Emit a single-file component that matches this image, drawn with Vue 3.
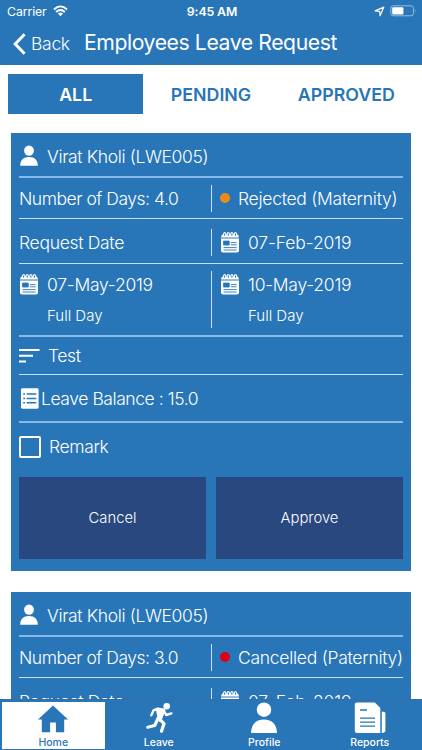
<script setup>
const tabs = ['ALL', 'PENDING', 'APPROVED']
const requests = [
  { id: 1, days: '4.0', status: 'Rejected (Maternity)', tone: 'rejected' },
  { id: 2, days: '3.0', status: 'Cancelled (Paternity)', tone: 'cancelled' },
]
</script>

<template>
  <div class="screen">
    <header class="header">
      <div class="status">
        <div class="carrier">
          <span>Carrier</span>
          <svg width="15" height="12" viewBox="0 0 15 12">
            <g fill="none" stroke="currentColor" stroke-width="1.8">
              <path d="M.9 4.5Q7.5-1.7 14.1 4.5" />
              <path d="M3.1 7Q7.5 2.9 11.9 7" />
            </g>
            <path d="M4.9 8.6Q7.5 6.4 10.1 8.6L7.5 11.2Z" fill="currentColor" />
          </svg>
        </div>
        <span class="time">9:45 AM</span>
        <div class="indicators">
          <svg width="11" height="11" viewBox="0 0 11 11">
            <path d="M9.8 1.1L1.2 4.9L5.7 5.3L6.1 9.8Z" fill="none" stroke="currentColor" stroke-width="1.2" stroke-linejoin="round" />
          </svg>
          <svg width="27" height="12" viewBox="0 0 27 12">
            <rect x=".8" y=".8" width="22.6" height="10" rx="2.4" fill="none" stroke="#8fbde3" />
            <rect x="2.2" y="2.2" width="11.2" height="7.2" rx="1" fill="#fff" />
            <path d="M24.8 4Q26.5 5.8 24.8 7.6Z" fill="#8fbde3" />
          </svg>
        </div>
      </div>
      <div class="nav">
        <svg class="chevron" width="14" height="22" viewBox="0 0 14 22">
          <path d="M12.6 1.2L3.2 11L12.6 20.8" fill="none" stroke="currentColor" stroke-width="3" />
        </svg>
        <span class="back">Back</span>
        <span class="title">Employees Leave Request</span>
      </div>
    </header>

    <div class="tabs">
      <div v-for="(tab, i) in tabs" :key="tab" class="tab" :class="{ active: i === 0 }">{{ tab }}</div>
    </div>

    <main class="list">
      <article v-for="r in requests" :key="r.id" class="card">
        <div class="row name">
          <svg class="icon" width="20" height="22" viewBox="0 0 20 22">
            <ellipse cx="10" cy="5.6" rx="4.9" ry="5.2" fill="#fff" />
            <path d="M1.2 20.8C1.2 15.2 4.4 12 10 12S18.8 15.2 18.8 20.8Z" fill="#fff" />
          </svg>
          <span class="t-name">Virat Kholi (LWE005)</span>
        </div>
        <div class="row days">
          <div class="cell"><span class="t-days">Number of Days: {{ r.days }}</span></div>
          <div class="cell split">
            <i class="dot" :class="r.tone"></i>
            <span class="t-status">{{ r.status }}</span>
          </div>
        </div>
        <div class="row requested">
          <div class="cell"><span class="t-request">Request Date</span></div>
          <div class="cell split">
            <svg class="icon" width="20" height="21" viewBox="0 0 20 21">
              <path d="M1 5.6L1.6 3.6Q2 2.4 3.2 2.4H16.8Q18 2.4 18.4 3.6L19 5.6Z" fill="#fff" />
              <g fill="#2876b8" stroke="#fff" stroke-width="1.2">
                <ellipse cx="4.7" cy="2.6" rx="1.2" ry="2" /><ellipse cx="8.3" cy="2.6" rx="1.2" ry="2" />
                <ellipse cx="11.9" cy="2.6" rx="1.2" ry="2" /><ellipse cx="15.5" cy="2.6" rx="1.2" ry="2" />
              </g>
              <path d="M1 6.6H19V18.6Q19 20.6 17 20.6H3Q1 20.6 1 18.6Z" fill="#fff" />
              <path d="M3.6 9.1H9.2V13H3.6ZM11 10.6H16.6M11 12.8H16.6M3.6 15.6H16.6M3.6 18H16.6" fill="#2876b8" stroke="#2876b8" stroke-width=".9" />
            </svg>
            <span class="t-feb">07-Feb-2019</span>
          </div>
        </div>
        <div class="row range">
          <div v-for="(date, i) in ['07-May-2019', '10-May-2019']" :key="date" class="cell period" :class="{ split: i === 1 }">
            <svg class="icon" width="20" height="21" viewBox="0 0 20 21">
              <path d="M1 5.6L1.6 3.6Q2 2.4 3.2 2.4H16.8Q18 2.4 18.4 3.6L19 5.6Z" fill="#fff" />
              <g fill="#2876b8" stroke="#fff" stroke-width="1.2">
                <ellipse cx="4.7" cy="2.6" rx="1.2" ry="2" /><ellipse cx="8.3" cy="2.6" rx="1.2" ry="2" />
                <ellipse cx="11.9" cy="2.6" rx="1.2" ry="2" /><ellipse cx="15.5" cy="2.6" rx="1.2" ry="2" />
              </g>
              <path d="M1 6.6H19V18.6Q19 20.6 17 20.6H3Q1 20.6 1 18.6Z" fill="#fff" />
              <path d="M3.6 9.1H9.2V13H3.6ZM11 10.6H16.6M11 12.8H16.6M3.6 15.6H16.6M3.6 18H16.6" fill="#2876b8" stroke="#2876b8" stroke-width=".9" />
            </svg>
            <div class="stack">
              <span class="t-date">{{ date }}</span>
              <span class="t-full">Full Day</span>
            </div>
          </div>
        </div>
        <div class="row reason">
          <svg class="icon" width="21" height="14" viewBox="0 0 21 14">
            <path d="M0 1.1H20.5M0 6.8H14M0 12.6H7" stroke="#fff" stroke-width="2" />
          </svg>
          <span class="t-test">Test</span>
        </div>
        <div class="row balance">
          <svg class="icon" width="18" height="21" viewBox="0 0 18 21">
            <rect width="17.6" height="20.4" y=".3" rx="1.4" fill="#fff" />
            <path d="M5.6 6.1H15.3M5.6 10.4H15.3M5.6 14.8H15.3M2.2 6.1H4M2.2 10.4H4M2.2 14.8H4" stroke="#2876b8" stroke-width="1.5" />
          </svg>
          <span class="t-balance">Leave Balance : 15.0</span>
        </div>
        <div class="remark">
          <span class="checkbox"></span>
          <span class="t-remark">Remark</span>
        </div>
        <div class="actions">
          <div class="button">Cancel</div>
          <div class="button">Approve</div>
        </div>
      </article>
    </main>

    <nav class="tabbar">
      <div class="item selected">
        <svg width="36" height="30" viewBox="0 0 36 30">
          <path d="M18 1.4L33 15.4H29.2V28.2H20.9V18.4H15.1V28.2H6.8V15.4H3Z" fill="currentColor" />
        </svg>
        <span>Home</span>
      </div>
      <div class="item">
        <svg width="36" height="32" viewBox="0 0 36 32">
          <circle cx="25.7" cy="4.2" r="3.3" fill="#fff" />
          <path d="M16.5 7.2L22.7 8.2L18.8 18Z" fill="#fff" stroke="#fff" stroke-width="3.5" stroke-linejoin="round" />
          <g fill="none" stroke="#fff" stroke-linecap="round" stroke-linejoin="round">
            <path d="M16.6 7L12.6 8.2L10.3 13.2" stroke-width="2.4" />
            <path d="M22.6 8.4L25.2 13L30.4 11.4" stroke-width="2.4" />
            <path d="M17.2 16L13.7 23.5L6.7 25.2" stroke-width="3.2" />
            <path d="M18.4 17L23 21.7L20.5 29.3" stroke-width="3.2" />
          </g>
        </svg>
        <span>Leave</span>
      </div>
      <div class="item">
        <svg width="36" height="32" viewBox="0 0 36 32">
          <circle cx="18" cy="7.7" r="7.2" fill="#fff" />
          <path d="M5 31C5.2 22.2 10 17.4 18 17.4S30.8 22.2 31 31Z" fill="#fff" />
        </svg>
        <span>Profile</span>
      </div>
      <div class="item">
        <svg width="36" height="32" viewBox="0 0 36 32">
          <path d="M4.8 .5H22.8L28.3 6V31H4.8Q2.8 31 2.8 29V2.5Q2.8 .5 4.8 .5Z" fill="#fff" />
          <path d="M29.8 9.7H31.6Q33.4 9.7 33.4 11.5V28.6Q33.4 31 29.8 31Z" fill="#fff" />
          <path d="M8 8H15M8 16.2H23M8 20.2H23M8 24.2H23" stroke="#2876b8" stroke-width="1.3" />
        </svg>
        <span>Reports</span>
      </div>
    </nav>
  </div>
</template>

<style>
body { background: #fff; }
</style>

<style scoped>
* { box-sizing: border-box; }
.screen {
  width: 422px; height: 750px; overflow: hidden;
  display: flex; flex-direction: column;
  background: #fff; color: #fff;
  font-family: Inter, "Liberation Sans", sans-serif; font-weight: 300;
}
svg { display: block; flex: none; }
span { white-space: nowrap; }
.header { flex: none; height: 65px; background: #2876b8; }
.status { display: grid; grid-template-columns: 1fr auto 1fr; align-items: center; height: 22px; padding: 0 5px 0 7px; font-size: 12.3px; }
.carrier { display: flex; align-items: center; gap: 6px; font-weight: 400; letter-spacing: -.1px; }
.time { font-weight: 600; letter-spacing: -.1px; }
.indicators { display: flex; align-items: center; justify-content: flex-end; gap: 5px; }
.nav { display: flex; align-items: center; height: 43px; padding-left: 12px; }
.chevron { margin-right: 5px; }
.back { width: 53px; font-size: 17.5px; letter-spacing: -.3px; }
.title { height: 32px; line-height: 28px; font-size: 21.2px; font-weight: 400; letter-spacing: -.42px; }
.tabs { flex: none; display: grid; grid-template-columns: repeat(3, 1fr); height: 68px; padding: 9px 8px 19px; color: #2876b8; }
.tab { display: flex; align-items: center; justify-content: center; font-size: 17.8px; font-weight: 600; }
.active { background: #2876b8; color: #fff; }
.list { flex: 1; min-height: 0; overflow: hidden; display: flex; flex-direction: column; gap: 21px; padding: 0 11px; }
.card { flex: none; height: 438px; padding: 0 8px; background: #2876b8; font-size: 17.5px; }
.row { display: flex; align-items: center; border-bottom: 1px solid #c6e2fa; }
.name { height: 45px; padding-top: 3px; border-bottom: 2px solid #86bbe9; }
.name .icon { margin-right: 8px; }
.t-name { letter-spacing: -.36px; }
.days { height: 41px; }
.t-days { letter-spacing: -.48px; }
.t-status { letter-spacing: -.27px; }
.requested { height: 45px; padding-top: 2px; }
.t-request { letter-spacing: -.3px; }
.t-feb { letter-spacing: -.13px; }
.cell { width: 192px; height: 27px; display: flex; align-items: center; }
.split { border-left: 1px solid #c6e2fa; padding-left: 8px; }
.split .icon { margin-right: 8px; }
.dot { flex: none; width: 10px; height: 10px; border-radius: 50%; margin-right: 8px; }
.rejected { background: #ed8b16; }
.cancelled { background: #dc0019; }
.range { height: 73px; border-bottom: 2px solid #86bbe9; }
.period { height: 57px; align-items: flex-start; }
.period .icon { margin: 3px 8px 0 0; }
.stack { display: flex; flex-direction: column; }
.t-date { height: 29px; line-height: 28px; letter-spacing: -.25px; }
.t-full { font-size: 15px; line-height: 31px; }
.reason { height: 38px; gap: 8px; }
.t-test { letter-spacing: -.4px; }
.balance { height: 48px; padding: 1px 0 0 2px; gap: 2px; border-bottom: 2px solid #86bbe9; }
.t-balance { letter-spacing: -.43px; }
.remark { height: 54px; display: flex; align-items: center; gap: 8px; padding-bottom: 7px; }
.t-remark { letter-spacing: -.35px; }
.checkbox { width: 22px; height: 22px; border: 2px solid #fff; border-radius: 2px; }
.actions { display: flex; gap: 10px; height: 82px; }
.button { width: 187px; display: flex; align-items: center; justify-content: center; background: #28487f; font-size: 14.8px; }
.tabbar { flex: none; display: grid; grid-template-columns: repeat(4, 1fr); height: 51px; background: #2876b8; border-top: 1px solid #3a6ea2; }
.item { margin: 2px 1px 2px 2px; display: flex; flex-direction: column; align-items: center; justify-content: flex-end; font-size: 10.5px; font-weight: 500; line-height: 13px; }
.item svg { margin-bottom: 2px; }
.selected { background: #fff; color: #2876b8; }
</style>
